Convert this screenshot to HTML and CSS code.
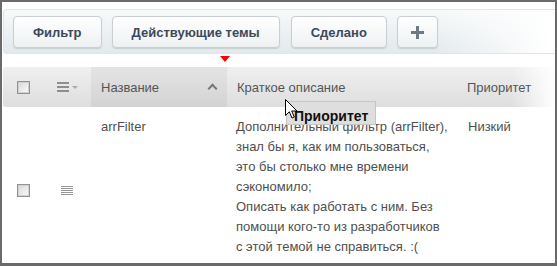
FILE: index.html
```html
<!DOCTYPE html>
<html lang="ru">
<head>
    <meta charset="UTF-8">
    <title>Темы</title>
    <link rel="stylesheet" href="styles.css">
</head>
<body>
    <div class="window">
        <div class="toolbar">
            <button class="tb-btn">Фильтр</button>
            <button class="tb-btn">Действующие темы</button>
            <button class="tb-btn">Сделано</button>
            <button class="tb-btn tb-plus"><span class="plus"></span></button>
        </div>
        <div class="drop-mark"></div>

        <div class="grid">
            <div class="head-row">
                <div class="cell cell-check"><span class="check"></span></div>
                <div class="cell cell-menu">
                    <span class="menu-icon"><i></i><i></i><i></i></span>
                    <span class="menu-caret"></span>
                </div>
                <div class="cell cell-sorted">Название <span class="sort-up"></span></div>
                <div class="cell cell-text">Краткое описание</div>
                <div class="cell cell-text">Приоритет</div>
            </div>

            <div class="data-row">
                <div class="cell cell-check mid"><span class="check"></span></div>
                <div class="cell cell-menu mid">
                    <span class="row-icon"><i></i><i></i><i></i><i></i><i></i></span>
                </div>
                <div class="cell cell-name">arrFilter</div>
                <div class="cell cell-desc">Дополнительный фильтр (arrFilter), знал бы я, как им пользоваться, это бы столько мне времени сэкономило;<br>Описать как работать с ним. Без помощи кого-то из разработчиков с этой темой не справиться. :(</div>
                <div class="cell cell-prio">Низкий</div>
            </div>
        </div>

        <div class="drag-ghost">Приоритет</div>
        <svg class="cursor" width="13" height="20" viewBox="0 0 13 20">
            <path d="M0.5 0.5 L0.5 16.5 L4.3 12.8 L7 19 L9.3 18 L6.7 12 L12 12 Z" fill="#fff" stroke="#000" stroke-width="1"/>
        </svg>
    </div>
</body>
</html>
```

FILE: styles.css
```css
* {
    margin: 0;
    padding: 0;
    box-sizing: border-box;
}

body {
    font-family: 'Liberation Sans', Arial, sans-serif;
    background: #fff;
}

.window {
    position: relative;
    width: 557px;
    height: 266px;
    border: 2px solid #6a6a6a;
    border-bottom-width: 3px;
    overflow: hidden;
    background: #fff;
}

.toolbar {
    display: flex;
    gap: 10px;
    margin: 7px 0 0 1px;
    height: 45px;
    padding: 6px 9px 0;
    border: 1px solid #dfe5e8;
    border-right: none;
    border-radius: 4px 0 0 4px;
    background: linear-gradient(to right, rgba(255,255,255,0) 78%, #fff 99%),
                linear-gradient(#f7f9fa, #e2e9ec);
}

.tb-btn {
    height: 32px;
    padding: 0 19px;
    font-family: 'Liberation Sans', Arial, sans-serif;
    font-size: 13px;
    font-weight: bold;
    color: #3b4a5a;
    border: 1px solid #c9cfd2;
    border-radius: 4px;
    background: linear-gradient(#ffffff, #eef1f2);
    box-shadow: 0 1px 1px rgba(0, 0, 0, 0.12);
    cursor: pointer;
}

.tb-btn:nth-child(2) {
    margin-right: 1px;
}

.tb-plus {
    width: 41px;
    padding: 0;
    display: flex;
    align-items: center;
    justify-content: center;
}

.plus {
    position: relative;
    width: 13px;
    height: 13px;
}

.plus::before,
.plus::after {
    content: '';
    position: absolute;
    background: #6e7982;
}

.plus::before {
    left: 0;
    top: 5px;
    width: 13px;
    height: 3px;
}

.plus::after {
    left: 5px;
    top: 0;
    width: 3px;
    height: 13px;
}

.drop-mark {
    position: absolute;
    left: 218px;
    top: 54px;
    width: 0;
    height: 0;
    border-left: 5px solid transparent;
    border-right: 5px solid transparent;
    border-top: 6px solid #f00;
}

.grid {
    margin: 13px 0 0 1px;
}

.head-row,
.data-row {
    display: grid;
    grid-template-columns: 41px 47px 136px 230px 1fr;
}

.head-row {
    height: 40px;
    border-radius: 3px 0 0 3px;
    background: linear-gradient(to right, rgba(255,255,255,0) 92%, #fff 100%),
                linear-gradient(#efefef, #dedede);
    color: #555;
    font-size: 13px;
}

.cell {
    display: flex;
    align-items: center;
}

.head-row .cell-text {
    padding-left: 10px;
}

.cell-check {
    padding-left: 14px;
}

.cell-menu {
    padding-left: 13px;
}

.cell-sorted {
    padding-left: 10px;
    background: linear-gradient(#e4e4e4, #d3d3d3);
    position: relative;
}

.check {
    width: 13px;
    height: 13px;
    border: 1px solid #939393;
    box-shadow: inset 0 0 0 1px #d0d0d0;
    background: linear-gradient(135deg, #d8d8d8, #fbfbfb);
}

.menu-icon {
    display: flex;
    flex-direction: column;
    gap: 2px;
    width: 12px;
}

.menu-icon i {
    display: block;
    height: 2px;
    background: #8e8e8e;
}

.menu-caret {
    margin-left: 3px;
    width: 0;
    height: 0;
    border-left: 3px solid transparent;
    border-right: 3px solid transparent;
    border-top: 3px solid #aaa;
}

.sort-up {
    position: absolute;
    left: 118px;
    top: 18px;
    width: 7px;
    height: 7px;
    border-left: 2px solid #777;
    border-top: 2px solid #777;
    transform: rotate(45deg);
}

.data-row {
    color: #4f4f4f;
    font-size: 13px;
    line-height: 20px;
    padding: 10px 0 22px;
}

.mid {
    align-self: center;
}

.cell-check.mid,
.cell-menu.mid {
    padding-top: 6px;
}

.cell-menu.mid {
    padding-left: 17px;
}

.row-icon {
    display: flex;
    flex-direction: column;
    gap: 1px;
    width: 12px;
}

.row-icon i {
    display: block;
    height: 1px;
    background: #999;
}

.cell-name,
.cell-desc,
.cell-prio {
    display: block;
    align-self: start;
}

.cell-name {
    padding-left: 10px;
}

.cell-desc {
    padding: 0 8px 0 9px;
}

.cell-prio {
    padding-left: 11px;
}

.drag-ghost {
    position: absolute;
    left: 284px;
    top: 99px;
    width: 90px;
    height: 24px;
    padding: 6px 0 0 7px;
    font-size: 14px;
    font-weight: bold;
    line-height: 16px;
    color: #111;
    background: #dedede;
    border: 1px solid #c6c6c6;
    overflow: hidden;
}

.cursor {
    position: absolute;
    left: 283px;
    top: 97px;
}
```
